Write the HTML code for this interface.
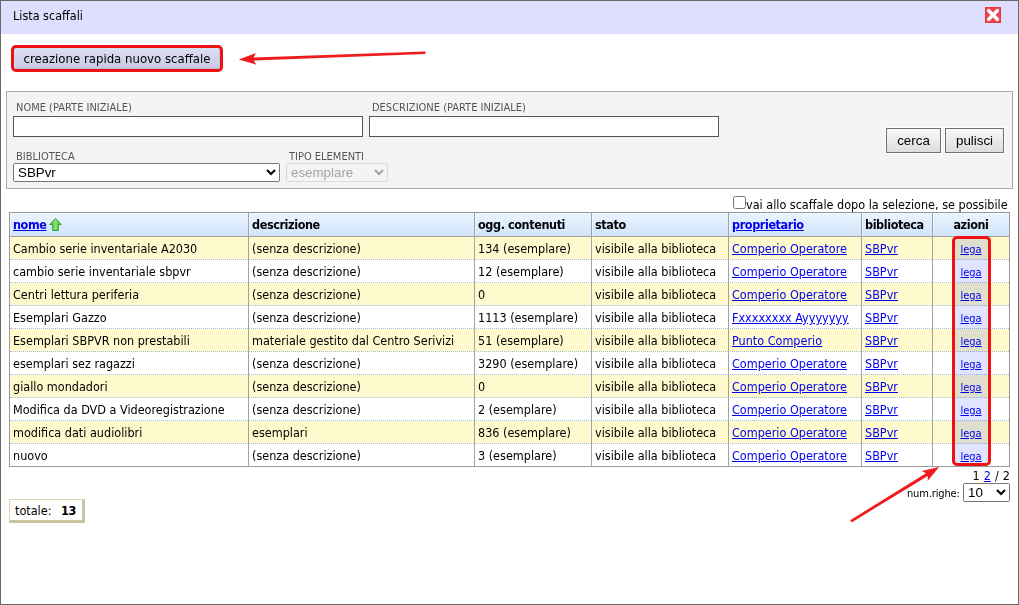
<!DOCTYPE html>
<html lang="it">
<head>
<meta charset="utf-8">
<title>Lista scaffali</title>
<style>
html,body{margin:0;padding:0;}
body{width:1019px;height:605px;overflow:hidden;background:#fff;position:relative;
 font-family:"DejaVu Sans Condensed","Liberation Sans",sans-serif;font-size:12.5px;color:#000;}
a{color:#0000ee;text-decoration:underline;}
#win{position:absolute;left:0;top:0;width:1017px;height:603px;border:1px solid #696969;background:#fff;}
#title{position:absolute;left:0;top:0;width:1017px;height:33px;background:#dedeff;}
#title span{position:absolute;left:12px;top:7px;line-height:16px;}
#close{position:absolute;left:984px;top:6px;width:16px;height:16px;}
#hl1{position:absolute;left:10px;top:44px;width:206px;height:21px;border:3px solid #ee1111;border-radius:5px;}
#newbtn{position:absolute;left:13px;top:47px;width:206px;height:21px;box-sizing:border-box;
 border:1px solid;border-color:#cfe1f5 #c4c4e2 #b9b9da #cfe1f5;border-radius:2px;background:linear-gradient(#dcdcf2,#cacae6);
 font:13.05px "DejaVu Sans Condensed","Liberation Sans",sans-serif;color:#000;padding:0;text-align:center;line-height:19px;}
#fs{position:absolute;left:5px;top:90px;width:1005px;height:96px;border:1px solid #aaa;background:#f4f4f4;}
.lbl{position:absolute;font-size:11px;color:#555;line-height:12px;white-space:nowrap;}
input.inp{position:absolute;box-sizing:border-box;width:350px;height:21px;border:1px solid #555;background:#fff;margin:0;padding:0 2px;font:13.33px "Liberation Sans",sans-serif;}
select{position:absolute;box-sizing:border-box;margin:0;font:13.33px "Liberation Sans",sans-serif;}
button.btn{position:absolute;box-sizing:border-box;margin:0;padding:0;border:1px solid #707070;border-radius:0;
 background:linear-gradient(#f8f8f8,#dddddd);height:25px;text-align:center;font:13.33px "Liberation Sans",sans-serif;color:#000;box-shadow:0 0 0 1px #fff;}
#chk{position:absolute;left:732px;top:195px;width:13px;height:13px;margin:0;}
#chklbl{position:absolute;left:745px;top:196px;line-height:16px;white-space:nowrap;}
table#grid{position:absolute;left:8px;top:211px;width:1001px;table-layout:fixed;border-collapse:separate;border-spacing:0;border:1px solid #999;}
#grid th,#grid td{box-sizing:border-box;padding:0 0 0 3px;text-align:left;white-space:nowrap;overflow:hidden;border-left:1px solid #a2a2a2;}
#grid th:first-child,#grid td:first-child{border-left:0;}
#grid th{height:24px;font-weight:bold;letter-spacing:-0.4px;background:linear-gradient(#ebf4ff,#d1e5fc);border-bottom:1px solid #a2a2a2;box-shadow:inset 1px 1px 0 rgba(255,255,255,.4);line-height:22px;}
#grid td{background-clip:padding-box;height:23px;border-bottom:1px dotted #a3bde3;line-height:20px;padding-top:2px;}
#grid tr:last-child td{height:22px;border-bottom:0;}
#grid tr.o td{background:#fffacd;}
#grid td.az,#grid th.az{text-align:center;padding-left:0;}
#grid td.az a{font-size:11px;display:block;line-height:20px;position:relative;top:1px;}
#hl2{position:absolute;left:951px;top:235px;width:33px;height:224px;border:3px solid #ee1111;border-radius:5px;}
#hl2f{position:absolute;left:954px;top:238px;width:33px;height:224px;background:#e0e4ff;mix-blend-mode:multiply;}
#pag{position:absolute;right:8px;top:467px;word-spacing:0.5px;line-height:16px;white-space:nowrap;}
#nrl{position:absolute;left:906px;top:486px;font-size:11px;letter-spacing:-0.15px;line-height:14px;white-space:nowrap;}
#nr{left:962px;top:482px;width:47px;height:19px;}
#tot{position:absolute;left:8px;top:498px;width:76px;height:24px;box-sizing:border-box;border-style:solid;border-width:1px 3px 3px 1px;border-color:#dcd8b6 #c9c5a2 #c9c5a2 #dcd8b6;background:#fff;line-height:22px;padding-left:5px;white-space:nowrap;}
#tot b{margin-left:6px;letter-spacing:-0.4px;}
svg.arr{position:absolute;left:-1px;top:-1px;width:1019px;height:605px;pointer-events:none;}
</style>
</head>
<body>
<div id="win">
 <div id="title"><span>Lista scaffali</span>
  <svg id="close" viewBox="0 0 16 16"><rect width="16" height="16" fill="#ec353e"/><rect x="1" y="1" width="14" height="14" fill="#ef444c"/><path d="M3.7 3.7L12.3 12.3M12.3 3.7L3.7 12.3" stroke="#fff" stroke-width="3.5" stroke-linecap="round"/></svg>
 </div>
 <div id="newbtn">creazione rapida nuovo scaffale</div>
 <div id="hl1"></div>
 <div id="fs"></div>
 <div class="lbl" style="left:15px;top:101px;">NOME (PARTE INIZIALE)</div>
 <input class="inp" type="text" style="left:12px;top:115px;">
 <div class="lbl" style="left:371px;top:101px;">DESCRIZIONE (PARTE INIZIALE)</div>
 <input class="inp" type="text" style="left:368px;top:115px;">
 <div class="lbl" style="left:15px;top:150px;">BIBLIOTECA</div>
 <select style="left:12px;top:162px;width:267px;height:19px;"><option>SBPvr</option></select>
 <div class="lbl" style="left:288px;top:150px;">TIPO ELEMENTI</div>
 <select disabled style="left:285px;top:162px;width:102px;height:19px;"><option>esemplare</option></select>
 <button class="btn" style="left:885px;top:127px;width:55px;">cerca</button>
 <button class="btn" style="left:944px;top:127px;width:59px;">pulisci</button>
 <input id="chk" type="checkbox"><div id="chklbl">vai allo scaffale dopo la selezione, se possibile</div>

 <table id="grid">
  <colgroup><col style="width:238px"><col style="width:226px"><col style="width:117px"><col style="width:137px"><col style="width:133px"><col style="width:71px"><col style="width:77px"></colgroup>
  <tr><th><a href="#">nome</a><svg width="13" height="13" viewBox="0 0 13 13" style="vertical-align:-2px;margin-left:2.6px"><defs><linearGradient id="gg" x1="0" y1="0" x2="1" y2="0"><stop offset="0" stop-color="#43b83d"/><stop offset="0.5" stop-color="#86e572"/><stop offset="1" stop-color="#3db238"/></linearGradient></defs><path d="M6.5 0.5L12.2 6.5H9.3V12.5H3.7V6.5H0.8Z" fill="url(#gg)" stroke="#2f9e2b" stroke-width="1" stroke-linejoin="round"/></svg></th><th>descrizione</th><th>ogg. contenuti</th><th>stato</th><th><a href="#">proprietario</a></th><th>biblioteca</th><th class="az">azioni</th></tr>
  <tr class="o"><td>Cambio serie inventariale A2030</td><td>(senza descrizione)</td><td>134 (esemplare)</td><td>visibile alla biblioteca</td><td><a href="#">Comperio Operatore</a></td><td><a href="#">SBPvr</a></td><td class="az"><a href="#">lega</a></td></tr>
  <tr><td>cambio serie inventariale sbpvr</td><td>(senza descrizione)</td><td>12 (esemplare)</td><td>visibile alla biblioteca</td><td><a href="#">Comperio Operatore</a></td><td><a href="#">SBPvr</a></td><td class="az"><a href="#">lega</a></td></tr>
  <tr class="o"><td>Centri lettura periferia</td><td>(senza descrizione)</td><td>0</td><td>visibile alla biblioteca</td><td><a href="#">Comperio Operatore</a></td><td><a href="#">SBPvr</a></td><td class="az"><a href="#">lega</a></td></tr>
  <tr><td>Esemplari Gazzo</td><td>(senza descrizione)</td><td>1113 (esemplare)</td><td>visibile alla biblioteca</td><td><a href="#">Fxxxxxxxx Ayyyyyyy</a></td><td><a href="#">SBPvr</a></td><td class="az"><a href="#">lega</a></td></tr>
  <tr class="o"><td>Esemplari SBPVR non prestabili</td><td>materiale gestito dal Centro Serivizi</td><td>51 (esemplare)</td><td>visibile alla biblioteca</td><td><a href="#">Punto Comperio</a></td><td><a href="#">SBPvr</a></td><td class="az"><a href="#">lega</a></td></tr>
  <tr><td>esemplari sez ragazzi</td><td>(senza descrizione)</td><td>3290 (esemplare)</td><td>visibile alla biblioteca</td><td><a href="#">Comperio Operatore</a></td><td><a href="#">SBPvr</a></td><td class="az"><a href="#">lega</a></td></tr>
  <tr class="o"><td>giallo mondadori</td><td>(senza descrizione)</td><td>0</td><td>visibile alla biblioteca</td><td><a href="#">Comperio Operatore</a></td><td><a href="#">SBPvr</a></td><td class="az"><a href="#">lega</a></td></tr>
  <tr><td>Modifica da DVD a Videoregistrazione</td><td>(senza descrizione)</td><td>2 (esemplare)</td><td>visibile alla biblioteca</td><td><a href="#">Comperio Operatore</a></td><td><a href="#">SBPvr</a></td><td class="az"><a href="#">lega</a></td></tr>
  <tr class="o"><td>modifica dati audiolibri</td><td>esemplari</td><td>836 (esemplare)</td><td>visibile alla biblioteca</td><td><a href="#">Comperio Operatore</a></td><td><a href="#">SBPvr</a></td><td class="az"><a href="#">lega</a></td></tr>
  <tr><td>nuovo</td><td>(senza descrizione)</td><td>3 (esemplare)</td><td>visibile alla biblioteca</td><td><a href="#">Comperio Operatore</a></td><td><a href="#">SBPvr</a></td><td class="az"><a href="#">lega</a></td></tr>
 </table>
 <div id="hl2f"></div>
 <div id="hl2"></div>

 <div id="pag">1 <a href="#">2</a> / 2</div>
 <div id="nrl">num.righe:</div>
 <select id="nr"><option>10</option></select>
 <div id="tot">totale: <b>13</b></div>

 <svg class="arr" viewBox="0 0 1019 605">
  <g fill="#ee1c1c" stroke="none">
   <path d="M425.35 51.5 L253.7 57.4 L255.9 53.1 L238.8 59.55 L256.3 64.7 L253.85 60.6 L425.45 54.1 Z"/>
   <path d="M850.2 520.2 L926.0 473.2 L921.7 471.0 L939.2 467.0 L927.7 480.8 L927.7 476.0 L851.6 522.4 Z"/>
  </g>
 </svg>
</div>
</body>
</html>
